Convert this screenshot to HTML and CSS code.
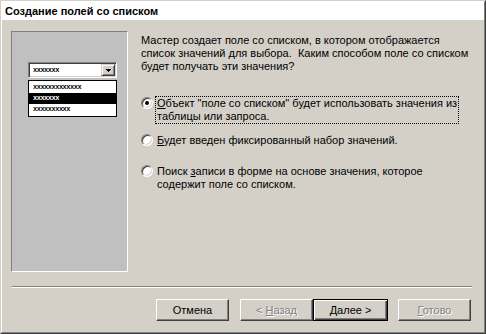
FILE: index.html
```html
<!DOCTYPE html>
<html lang="ru">
<head>
  <meta charset="UTF-8">
  <title>Создание полей со списком</title>
  <link rel="stylesheet" href="styles.css">
</head>
<body>
  <div class="window">
    <div class="frame">
      <div class="header">Создание полей со списком</div>
      <div class="body">
        <div class="main">
          <div class="preview">
            <div class="combo">
              <span class="fake">xxxxxxx</span>
              <span class="drop">
                <svg width="5" height="3" viewBox="0 0 5 3" shape-rendering="crispEdges"><path d="M0 0h5v1h-1v1h-1v1h-1v-1h-1v-1h-1z" fill="#000"/></svg>
              </span>
            </div>
            <div class="list">
              <div class="row"><span class="fake">xxxxxxxxxxxxx</span></div>
              <div class="row sel"><span class="fake">xxxxxxx</span></div>
              <div class="row"><span class="fake">xxxxxxxxxx</span></div>
            </div>
          </div>
          <div class="content">
            <p class="intro">Мастер создает поле со списком, в котором отображается<br>список значений для выбора.&nbsp; Каким способом поле со списком<br>будет получать эти значения?</p>
            <div class="option first">
              <span class="radio checked"></span>
              <span class="label focus"><u>О</u>бъект "поле со списком" будет использовать значения из<br>таблицы или запроса.</span>
            </div>
            <div class="option second">
              <span class="radio"></span>
              <span class="label"><u>Б</u>удет введен фиксированный набор значений.</span>
            </div>
            <div class="option third">
              <span class="radio"></span>
              <span class="label">Поиск <u>з</u>аписи в форме на основе значения, которое<br>содержит поле со списком.</span>
            </div>
          </div>
        </div>
        <div class="separator"></div>
        <div class="buttons">
          <button type="button" class="btn cancel">Отмена</button>
          <button type="button" class="btn back" disabled>&lt; <u>Н</u>азад</button>
          <button type="button" class="btn next default"><u>Д</u>алее &gt;</button>
          <button type="button" class="btn finish" disabled><u>Г</u>отово</button>
        </div>
      </div>
    </div>
  </div>
</body>
</html>
```

FILE: styles.css
```css
body {
  margin: 0;
  background: #d4d0c8;
  font-family: "Liberation Sans", Arial, sans-serif;
  font-size: 11px;
  color: #000;
}

.window {
  width: 486px;
  height: 334px;
  box-sizing: border-box;
  border: 1px solid;
  border-color: #d4d0c8 #404040 #404040 #d4d0c8;
}

.frame {
  height: 100%;
  box-sizing: border-box;
  border: 1px solid;
  border-color: #fff #808080 #808080 #fff;
  display: flex;
  flex-direction: column;
}

.header {
  height: 18px;
  background: #fff;
  font-weight: bold;
  padding-left: 3px;
  line-height: 19px;
  white-space: nowrap;
}

.body {
  flex: 1;
  display: flex;
  flex-direction: column;
}

.main {
  display: flex;
  padding: 11px 0 0 9px;
}

.preview {
  width: 117px;
  height: 241px;
  box-sizing: border-box;
  flex-shrink: 0;
  border: 1px solid;
  border-color: #808080 #fff #fff #808080;
  background: #c0c0c0;
  padding: 30px 0 0 16px;
}

.combo {
  width: 89px;
  height: 16px;
  box-sizing: border-box;
  border: 1px solid;
  border-color: #808080 #fff #fff #808080;
  box-shadow: inset 1px 1px #404040, inset -1px -1px #d4d0c8;
  background: #fff;
  display: flex;
  align-items: center;
  padding: 1px;
}

.combo .fake {
  flex: 1;
  padding-left: 3px;
}

.drop {
  width: 14px;
  height: 12px;
  box-sizing: border-box;
  border: 1px solid;
  border-color: #d4d0c8 #404040 #404040 #d4d0c8;
  box-shadow: inset 1px 1px #fff, inset -1px -1px #808080;
  background: #d4d0c8;
  display: flex;
  align-items: center;
  justify-content: center;
}

.drop svg {
  display: block;
}

.list {
  width: 89px;
  margin-top: 2px;
  box-sizing: border-box;
  border: 1px solid #000;
  background: #fff;
  padding: 1px 0;
}

.row {
  height: 11px;
  padding-left: 4px;
  display: flex;
  align-items: center;
}

.row.sel {
  background: #000;
  color: #fff;
}

.fake {
  font-family: "Liberation Mono", monospace;
  font-weight: bold;
  font-size: 7px;
  letter-spacing: -0.5px;
  line-height: 7px;
}

.content {
  margin-left: 13px;
  padding-top: 3px;
}

.intro {
  margin: 0;
  line-height: 13px;
  white-space: nowrap;
}

.option {
  display: flex;
  align-items: flex-start;
}

.option.first {
  margin-top: 23px;
}

.option.second {
  margin-top: 9px;
}

.option.third {
  margin-top: 16px;
}

.radio {
  width: 12px;
  height: 12px;
  margin-top: 1px;
  flex-shrink: 0;
  box-sizing: border-box;
  border-radius: 50%;
  border: 1px solid;
  border-color: #808080 #fff #fff #808080;
  box-shadow: inset 1px 1px #404040, inset -1px -1px #d4d0c8;
  background: #fff;
  display: flex;
  align-items: center;
  justify-content: center;
}

.radio.checked::after {
  content: "";
  width: 4px;
  height: 4px;
  border-radius: 50%;
  background: #000;
}

.label {
  margin-left: 2px;
  padding: 0 1px;
  border: 1px dotted transparent;
  line-height: 13px;
  white-space: nowrap;
}

.label.focus {
  border-color: #000;
}

.separator {
  margin: 14px 0 0 10px;
  width: 460px;
  height: 1px;
  background: #808080;
  border-bottom: 1px solid #fff;
}

.buttons {
  display: flex;
  justify-content: flex-end;
  margin-top: 11px;
  padding-right: 13px;
}

.btn {
  width: 73px;
  height: 22px;
  padding: 0;
  margin: 0;
  font: inherit;
  color: #000;
  background: #d4d0c8;
  border: 1px solid;
  border-color: #fff #404040 #404040 #fff;
  box-shadow: inset -1px -1px #808080;
  border-radius: 0;
}

.btn u {
  text-decoration: underline;
}

.btn.cancel {
  margin-right: 11px;
}

.btn.default {
  width: 75px;
  border-color: #000;
  box-shadow: inset 1px 1px #fff, inset -1px -1px #404040, inset -2px -2px #808080;
  margin-right: 10px;
}

.btn:disabled {
  color: #808080;
  text-shadow: 1px 1px #fff;
}
```
